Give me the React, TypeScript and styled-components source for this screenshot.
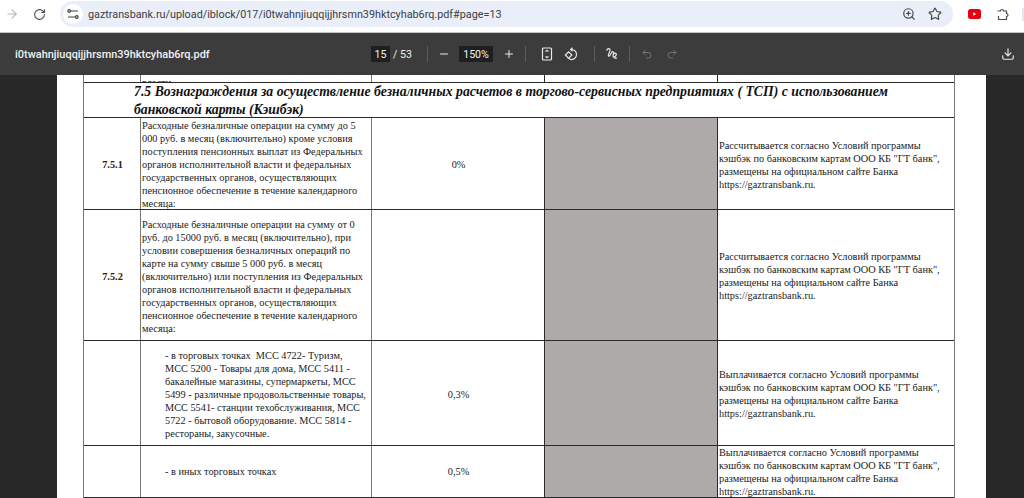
import styled, { createGlobalStyle } from "styled-components";
import { ArrowRight, RotateCw, Star, ZoomIn, Minus, Plus, Download, Undo2, Redo2 } from "lucide-react";

const GlobalStyle = createGlobalStyle`
  html, body {
    margin: 0;
    padding: 0;
    width: 1024px;
    height: 498px;
    overflow: hidden;
    background: #282828;
  }
`;

const Browser = styled.div`
  width: 1024px;
  height: 498px;
  display: flex;
  flex-direction: column;
  overflow: hidden;
  font-family: "Liberation Sans", Arial, sans-serif;
`;

const ChromeBar = styled.div`
  height: 33px;
  flex: none;
  display: flex;
  align-items: center;
  background: #fff;
  border-bottom: 1px solid #c4c4c4;
  box-sizing: border-box;
  padding: 0 0 4px 2px;
  color: #5f6368;
`;

const NavIcon = styled.div<{ $w: number; $muted?: boolean }>`
  width: ${(p) => p.$w}px;
  flex: none;
  display: flex;
  justify-content: center;
  color: ${(p) => (p.$muted ? "#b5b7ba" : "#4a4d51")};
`;

const Omnibox = styled.div`
  width: 893px;
  flex: none;
  height: 26px;
  margin-left: 4px;
  background: #e9eef8;
  border-radius: 13px;
  display: flex;
  align-items: center;
  box-sizing: border-box;
  padding: 0 11px 0 3px;
`;

const SiteChip = styled.div`
  width: 20px;
  height: 20px;
  border-radius: 50%;
  background: #fff;
  display: flex;
  align-items: center;
  justify-content: center;
  margin-right: 5px;
`;

const Url = styled.div`
  flex: 1;
  font: 10.8px "Roboto", "Liberation Sans", sans-serif;
  color: #3c4043;
`;

const OmniActions = styled.div`
  display: flex;
  gap: 12px;
  align-items: center;
  color: #45484c;
`;

const ExtSlot = styled.div<{ $w: number }>`
  width: ${(p) => p.$w}px;
  flex: none;
  display: flex;
  justify-content: center;
`;

const Tail = styled.div`
  width: 2px;
  height: 13px;
  background: #dfe7f8;
  margin-left: auto;
`;

const PdfBar = styled.div`
  height: 42px;
  flex: none;
  display: flex;
  align-items: center;
  background: #3c3c3c;
  color: #f1f1f1;
  font: 11px "Roboto", "Liberation Sans", sans-serif;
  padding-left: 15px;
`;

const FileName = styled.div`
  width: 356px;
  flex: none;
  font-weight: 500;
  font-size: 10.95px;
`;

const NumBox = styled.div<{ $w: number }>`
  width: ${(p) => p.$w}px;
  height: 16px;
  background: #1f1f1f;
  display: flex;
  align-items: center;
  justify-content: center;
  font-size: 10.6px;
`;

const Total = styled.span`
  width: 37px;
  flex: none;
  padding-left: 3px;
  box-sizing: border-box;
  font-size: 10.6px;
`;

const Divider = styled.div<{ $after?: number }>`
  width: 1px;
  height: 16px;
  background: #5c5c5c;
  flex: none;
  margin-right: ${(p) => p.$after ?? 0}px;
`;

const BarIcon = styled.div<{ $w: number; $muted?: boolean; $after?: number }>`
  width: ${(p) => p.$w}px;
  flex: none;
  display: flex;
  justify-content: center;
  margin-right: ${(p) => p.$after ?? 0}px;
  color: ${(p) => (p.$muted ? "#747474" : "#e8e8e8")};
`;

const Spacer = styled.div`
  flex: 1;
`;

const Viewer = styled.div`
  flex: 1;
  min-height: 0;
  background: #282828;
  overflow: hidden;
`;

const Sheet = styled.div`
  width: 929px;
  height: 100%;
  margin-left: 57px;
  background: #fff;
  padding-left: 26px;
  box-sizing: border-box;
  overflow: hidden;
  font-family: "Liberation Serif", "Times New Roman", serif;
  color: #222;
`;

const Table = styled.div`
  width: 872px;
  border-left: 1px solid #777;
  border-right: 1px solid #777;
  box-sizing: border-box;
`;

const Row = styled.div<{ $h: number }>`
  display: grid;
  grid-template-columns: 57px 231px 173px 173px 1fr;
  height: ${(p) => p.$h}px;
  border-bottom: 1px solid #2a2a2a;
  box-sizing: border-box;
  overflow: hidden;
`;

const Cell = styled.div<{
  $center?: boolean;
  $grey?: boolean;
  $indent?: boolean;
  $last?: boolean;
  $bold?: boolean;
  $soft?: boolean;
  $shift?: number;
}>`
  display: flex;
  align-items: center;
  justify-content: ${(p) => (p.$center ? "center" : "flex-start")};
  text-align: ${(p) => (p.$center ? "center" : "left")};
  border-right: ${(p) => (p.$last ? "none" : `1px solid ${p.$soft ? "#777" : "#2a2a2a"}`)};
  background: ${(p) => (p.$grey ? "#aeaaa9" : "#fff")};
  font-size: 10.3px;
  line-height: 13px;
  font-weight: ${(p) => (p.$bold ? 700 : 400)};
  padding-left: ${(p) => (p.$indent ? "24px" : "1px")};
  padding-top: ${(p) => p.$shift ?? 0}px;
  box-sizing: border-box;
  overflow: hidden;
  white-space: pre;
`;

const ClippedText = styled.div`
  align-self: flex-start;
  padding-top: 1px;
`;

const HeadingRow = styled.div`
  height: 35px;
  border-bottom: 1px solid #2a2a2a;
  box-sizing: border-box;
  padding-left: 50px;
  font-size: 13.75px;
  line-height: 17.5px;
  font-weight: 700;
  font-style: italic;
  color: #111;
  white-space: pre;
`;

const cashbackA = `Рассчитывается согласно Условий программы
кэшбэк по банковским картам ООО КБ "ГТ банк",
размещены на официальном сайте Банка
https://gaztransbank.ru.`;
const cashbackB = cashbackA.replace("Рассчитывается", "Выплачивается");

const rows = [
  {
    h: 92,
    shift: 2,
    num: "7.5.1",
    desc: `Расходные безналичные операции на сумму до 5
000 руб. в месяц (включительно) кроме условия
поступления пенсионных выплат из Федеральных
органов исполнительной власти и федеральных
государственных органов, осуществляющих
пенсионное обеспечение в течение календарного
месяца:`,
    val: "0%",
    note: cashbackA,
  },
  {
    h: 131,
    shift: 2,
    num: "7.5.2",
    desc: `Расходные безналичные операции на сумму от 0
руб. до 15000 руб. в месяц (включительно), при
условии совершения безналичных операций по
карте на сумму свыше 5 000 руб. в месяц
(включительно) или поступления из Федеральных
органов исполнительной власти и федеральных
государственных органов, осуществляющих
пенсионное обеспечение в течение календарного
месяца:`,
    val: "",
    note: cashbackA,
  },
  {
    h: 105,
    shift: 2,
    num: "",
    indent: true,
    desc: `- в торговых точках  МСС 4722- Туризм,
МСС 5200 - Товары для дома, МСС 5411 -
бакалейные магазины, супермаркеты, МСС
5499 - различные продовольственные товары,
МСС 5541- станции техобслуживания, МСС
5722 - бытовой оборудование. МСС 5814 -
рестораны, закусочные.`,
    val: "0,3%",
    note: cashbackB,
  },
  {
    h: 52,
    shift: 0,
    num: "",
    indent: true,
    desc: "- в иных торговых точках",
    val: "0,5%",
    note: cashbackB,
  },
];

function App() {
  return (
    <Browser>
      <GlobalStyle />
      <ChromeBar>
        <NavIcon $w={20} $muted>
          <ArrowRight size={14} />
        </NavIcon>
        <NavIcon $w={34}>
          <RotateCw size={13} />
        </NavIcon>
        <Omnibox>
          <SiteChip>
            <svg width="12" height="12" viewBox="0 0 12 12" fill="none" stroke="#3c4043" strokeWidth="1.2">
              <path d="M4 3h7M1 9h7" />
              <circle cx="2.2" cy="3" r="1.3" />
              <circle cx="9.8" cy="9" r="1.3" />
            </svg>
          </SiteChip>
          <Url>gaztransbank.ru/upload/iblock/017/i0twahnjiuqqijjhrsmn39hktcyhab6rq.pdf#page=13</Url>
          <OmniActions>
            <ZoomIn size={14} />
            <Star size={14} />
          </OmniActions>
        </Omnibox>
        <ExtSlot $w={43}>
          <svg width="13" height="10" viewBox="0 0 13 10">
            <rect width="13" height="10" rx="2.500" fill="#e60012" />
            <path d="M5.200 3.200v3.600l3-1.800z" fill="#fff" />
          </svg>
        </ExtSlot>
        <ExtSlot $w={13}>
          <svg width="13" height="13" viewBox="0 0 13 13" fill="none" stroke="#4a4d51" strokeWidth="1.2">
            <path d="M1.500 3H4.500a1.500 1.500 0 0 1 3 0H10.500V5.500a1.500 1.500 0 0 1 0 3V11.500H2.500V8" />
          </svg>
        </ExtSlot>
        <Tail />
      </ChromeBar>
      <PdfBar>
        <FileName>i0twahnjiuqqijjhrsmn39hktcyhab6rq.pdf</FileName>
        <NumBox $w={19}>15</NumBox>
        <Total>/ 53</Total>
        <Divider />
        <BarIcon $w={31}>
          <Minus size={12} />
        </BarIcon>
        <NumBox $w={34}>150%</NumBox>
        <BarIcon $w={32}>
          <Plus size={12} />
        </BarIcon>
        <Divider $after={8} />
        <BarIcon $w={25}>
          <svg width="12" height="14" viewBox="0 0 12 14" fill="none" stroke="currentColor" strokeWidth="1.2">
            <rect x="1.500" y="1" width="9" height="12" rx="1" />
            <path d="M4.500 4.500L6 3.500l1.500 1M4.500 9.500L6 10.500l1.500-1" />
          </svg>
        </BarIcon>
        <BarIcon $w={25} $after={10}>
          <svg width="15" height="15" viewBox="0 0 15 15" fill="none" stroke="currentColor" strokeWidth="1.2">
            <path d="M7.500 2.500a5 5 0 1 1-2.500 9.300" />
            <path d="M8.500 0.800L6.700 2.500 8.500 4.200" />
            <rect x="2.300" y="5.800" width="4.600" height="4.600" transform="rotate(45 4.600 8.100)" />
          </svg>
        </BarIcon>
        <Divider />
        <BarIcon $w={34}>
          <svg width="14" height="14" viewBox="0 0 14 14" fill="none" stroke="currentColor" strokeWidth="1.2">
            <path d="M1.500 3.500c1-2.500 4-2.500 3.500 0S2.500 8 3.500 9 6 6 7 5s2 .5 1.500 2-1 3 .5 3 3-2.500 2-3.500-3 0-3 2 2 3 4 2.500" />
          </svg>
        </BarIcon>
        <Divider />
        <BarIcon $w={34} $muted>
          <Undo2 size={12} />
        </BarIcon>
        <BarIcon $w={16} $muted>
          <Redo2 size={12} />
        </BarIcon>
        <Spacer />
        <BarIcon $w={32}>
          <Download size={14} />
        </BarIcon>
      </PdfBar>
      <Viewer>
        <Sheet>
          <Table>
            <Row $h={8}>
              <Cell $soft />
              <Cell $soft>
                <ClippedText>власти</ClippedText>
              </Cell>
              <Cell />
              <Cell />
              <Cell $last />
            </Row>
            <HeadingRow>{"7.5 Вознаграждения за осуществление безналичных расчетов в торгово-сервисных предприятиях ( ТСП) с использованием\nбанковской карты (Кэшбэк)"}</HeadingRow>
            {rows.map((r) => (
              <Row $h={r.h} key={r.h}>
                <Cell $center $bold $soft $shift={r.shift}>
                  {r.num}
                </Cell>
                <Cell $soft $indent={r.indent} $shift={r.shift}>
                  {r.desc}
                </Cell>
                <Cell $center $shift={r.shift}>
                  {r.val}
                </Cell>
                <Cell $grey />
                <Cell $last $shift={r.shift}>
                  {r.note}
                </Cell>
              </Row>
            ))}
          </Table>
        </Sheet>
      </Viewer>
    </Browser>
  );
}

export default App;
